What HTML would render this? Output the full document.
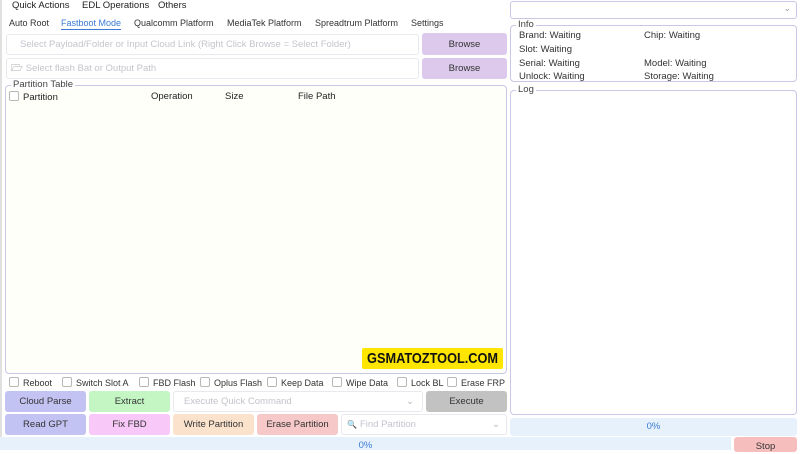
<!DOCTYPE html>
<html><head><meta charset="utf-8"><style>
*{box-sizing:border-box;margin:0;padding:0}
body{width:800px;height:450px;background:#fff;font-family:"Liberation Sans",sans-serif;font-size:10px;color:#222;position:relative;overflow:hidden}
.a{position:absolute;white-space:nowrap}
.in{position:absolute;border:1px solid #e8e8ee;border-radius:3px;background:#fff;color:#c4c4cc;font-size:9.5px;padding-left:12px;display:flex;align-items:center}
.btn{position:absolute;border-radius:3px;display:flex;align-items:center;justify-content:center;font-size:9.5px;color:#333}
.fs{position:absolute;border:1px solid #c9c7e6;border-radius:4px}
.lg{position:absolute;background:#fff;padding:0 2px;font-size:9.5px;color:#444;line-height:10px}
.cb{display:inline-block;width:10px;height:10px;border:1px solid #b8b8b8;border-radius:2px;vertical-align:-1px;margin-right:4px;background:#fff}
.chk{position:absolute;top:377px;font-size:9px;color:#333;white-space:nowrap}
</style></head><body>
<div class="a" style="left:0;top:0;width:2px;height:450px;background:#e0e0e0"></div>
<div class="a" style="left:12px;top:0;font-size:9.5px">Quick Actions</div>
<div class="a" style="left:82px;top:0;font-size:9.5px">EDL Operations</div>
<div class="a" style="left:158px;top:0;font-size:9.5px">Others</div>

<div class="a" style="left:9px;top:18px;font-size:9px;color:#333">Auto Root</div>
<div class="a" style="left:61px;top:18px;font-size:9px;color:#3a7bd5;border-bottom:1px solid #3a7bd5;padding-bottom:1px">Fastboot Mode</div>
<div class="a" style="left:134px;top:18px;font-size:9px;color:#333">Qualcomm Platform</div>
<div class="a" style="left:227px;top:18px;font-size:9px;color:#333">MediaTek Platform</div>
<div class="a" style="left:315px;top:18px;font-size:9px;color:#333">Spreadtrum Platform</div>
<div class="a" style="left:411px;top:18px;font-size:9px;color:#333">Settings</div>

<div class="in" style="left:6px;top:34px;width:413px;height:21px;padding-left:13px">Select Payload/Folder or Input Cloud Link (Right Click Browse = Select Folder)</div>
<div class="btn" style="left:422px;top:33px;width:85px;height:22px;background:#dcc9ec">Browse</div>
<div class="in" style="left:6px;top:58px;width:413px;height:21px;padding-left:4px"><span style="color:#666;margin-right:3px">🗁</span>Select flash Bat or Output Path</div>
<div class="btn" style="left:422px;top:58px;width:85px;height:21px;background:#dcc9ec">Browse</div>

<div class="fs" style="left:5px;top:85px;width:502px;height:289px;background:#fffffa"></div>
<div class="lg" style="left:11px;top:80px">Partition Table</div>
<div class="a" style="left:9px;top:91px;font-size:9.5px"><span class="cb"></span>Partition</div>
<div class="a" style="left:151px;top:91px;font-size:9.5px">Operation</div>
<div class="a" style="left:225px;top:91px;font-size:9.5px">Size</div>
<div class="a" style="left:298px;top:91px;font-size:9.5px">File Path</div>
<div class="a" style="left:362px;top:348px;width:141px;height:21px;background:#ffe600;border-radius:2px;overflow:hidden"><div style="color:#111;font-weight:bold;font-size:15px;line-height:21px;transform:scaleX(0.85);transform-origin:0 0;width:166px;text-align:center">GSMATOZTOOL.COM</div></div>

<div class="chk" style="left:9px"><span class="cb"></span>Reboot</div>
<div class="chk" style="left:62px"><span class="cb"></span>Switch Slot A</div>
<div class="chk" style="left:139px"><span class="cb"></span>FBD Flash</div>
<div class="chk" style="left:200px"><span class="cb"></span>Oplus Flash</div>
<div class="chk" style="left:267px"><span class="cb"></span>Keep Data</div>
<div class="chk" style="left:332px"><span class="cb"></span>Wipe Data</div>
<div class="chk" style="left:397px"><span class="cb"></span>Lock BL</div>
<div class="chk" style="left:447px"><span class="cb"></span>Erase FRP</div>

<div class="btn" style="left:5px;top:391px;width:81px;height:21px;background:#c3c3f3">Cloud Parse</div>
<div class="btn" style="left:89px;top:391px;width:81px;height:21px;background:#c4f6c4">Extract</div>
<div class="in" style="left:173px;top:391px;width:250px;height:21px;padding-left:10px">Execute Quick Command<span style="position:absolute;right:8px;color:#bbb">⌄</span></div>
<div class="btn" style="left:426px;top:391px;width:81px;height:21px;background:#c2c2c2">Execute</div>

<div class="btn" style="left:5px;top:414px;width:81px;height:21px;background:#c3c3f3">Read GPT</div>
<div class="btn" style="left:89px;top:414px;width:81px;height:21px;background:#f8c8f8">Fix FBD</div>
<div class="btn" style="left:173px;top:414px;width:81px;height:21px;background:#fbe2cc">Write Partition</div>
<div class="btn" style="left:257px;top:414px;width:81px;height:21px;background:#f7c8c8">Erase Partition</div>
<div class="in" style="left:341px;top:414px;width:166px;height:21px;padding-left:5px"><span style="color:#555;margin-right:3px;font-size:8px">🔍</span>Find Partition<span style="position:absolute;right:6px;color:#bbb">⌄</span></div>

<div class="a" style="left:0;top:437px;width:731px;height:13px;background:#e7f1fc;color:#3a7bd5;font-size:9.5px;text-align:center;line-height:17px">0%</div>
<div class="btn" style="left:734px;top:437px;width:63px;height:15px;background:#f6bfbd;align-items:flex-end">Stop</div>

<div class="a" style="left:510px;top:1px;width:287px;height:18px;border:1px solid #c9c7e6;border-radius:3px"><span style="position:absolute;right:5px;top:1px;color:#999;font-size:9px">⌄</span></div>
<div class="fs" style="left:510px;top:25px;width:287px;height:57px"></div>
<div class="lg" style="left:516px;top:20px">Info</div>
<div class="a" style="left:519px;top:30px;font-size:9.5px;color:#333">Brand: Waiting</div>
<div class="a" style="left:644px;top:30px;font-size:9.5px;color:#333">Chip: Waiting</div>
<div class="a" style="left:519px;top:44px;font-size:9.5px;color:#333">Slot: Waiting</div>
<div class="a" style="left:519px;top:58px;font-size:9.5px;color:#333">Serial: Waiting</div>
<div class="a" style="left:644px;top:58px;font-size:9.5px;color:#333">Model: Waiting</div>
<div class="a" style="left:519px;top:71px;font-size:9.5px;color:#333">Unlock: Waiting</div>
<div class="a" style="left:644px;top:71px;font-size:9.5px;color:#333">Storage: Waiting</div>
<div class="fs" style="left:510px;top:90px;width:287px;height:325px"></div>
<div class="lg" style="left:516px;top:85px">Log</div>
<div class="a" style="left:510px;top:418px;width:287px;height:18px;background:#e7f1fc;border-radius:3px;color:#3a7bd5;font-size:9.5px;text-align:center;line-height:18px">0%</div>
</body></html>
